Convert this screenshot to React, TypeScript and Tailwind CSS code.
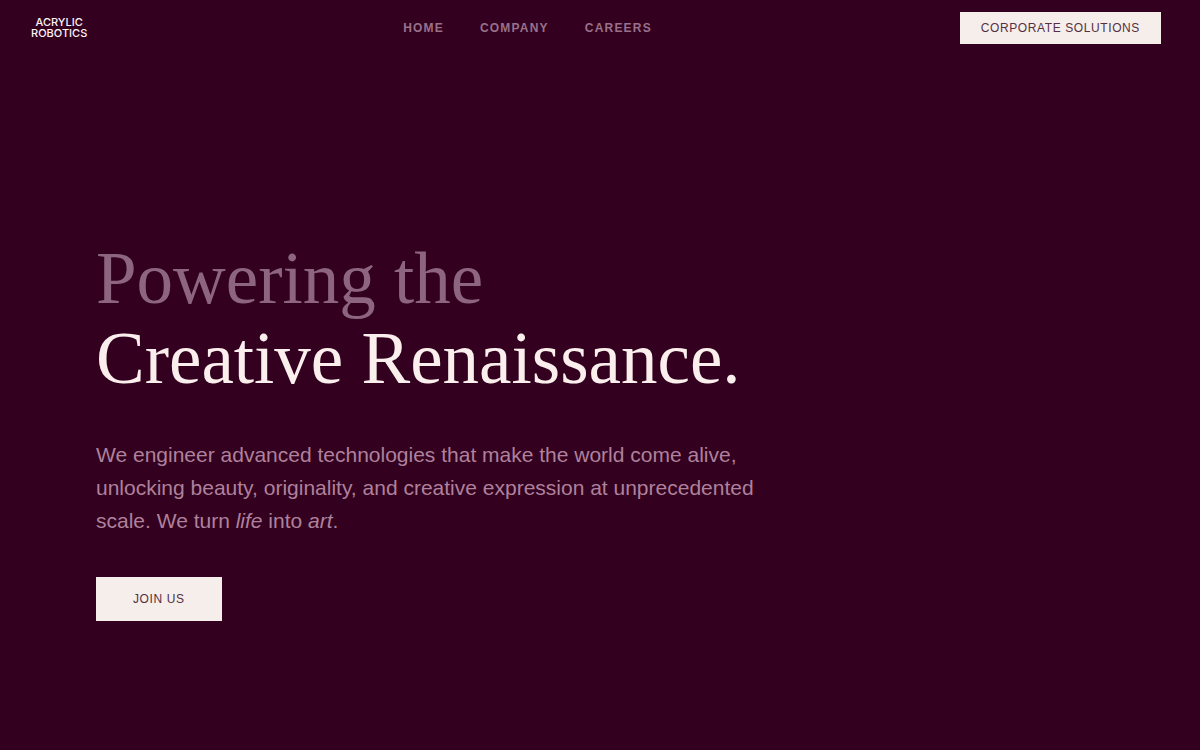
const navLinks = ["Home", "Company", "Careers"];

function Header() {
  return (
    <header className="flex h-14 items-center justify-between pr-[39px] pl-[31px]">
      <a
        href="#home"
        className="text-center font-['Inter','Liberation_Sans',sans-serif] text-[11px] leading-[11px] font-medium text-[#fdf3f6]"
      >
        ACRYLIC
        <br />
        ROBOTICS
      </a>
      <nav aria-label="Main" className="flex gap-9 pl-2">
        {navLinks.map((label) => (
          <a
            key={label}
            href={`#${label.toLowerCase()}`}
            className="text-xs font-bold tracking-widest text-[#99708a] uppercase"
          >
            {label}
          </a>
        ))}
      </nav>
      <button
        type="button"
        className="h-8 bg-[#f5eeeb] px-[21px] text-xs tracking-wider text-[#553044] uppercase"
      >
        Corporate Solutions
      </button>
    </header>
  );
}

function Hero() {
  return (
    <main className="flex flex-1 flex-col items-start px-24 pt-[183px] pb-32">
      <h1 className="font-['Liberation_Serif',serif] text-[73px] leading-[80px] text-[#fbefee]">
        <span className="text-[#8d6580]">Powering the</span>
        <br />
        Creative Renaissance.
      </h1>
      <p className="mt-[39px] max-w-[672px] text-[21px] leading-[33px] text-[#af819c]">
        We engineer advanced technologies that make the world come alive,
        unlocking beauty, originality, and creative expression at unprecedented
        scale. We turn <em>life</em> into <em>art</em>.
      </p>
      <button
        type="button"
        className="mt-10 h-11 bg-[#f5eeeb] px-[37px] text-xs tracking-wider text-[#553044] uppercase"
      >
        Join us
      </button>
    </main>
  );
}

export default function App() {
  return (
    <div className="flex min-h-screen flex-col bg-[#33001f] font-['Liberation_Sans',Arial,sans-serif]">
      <Header />
      <Hero />
    </div>
  );
}
